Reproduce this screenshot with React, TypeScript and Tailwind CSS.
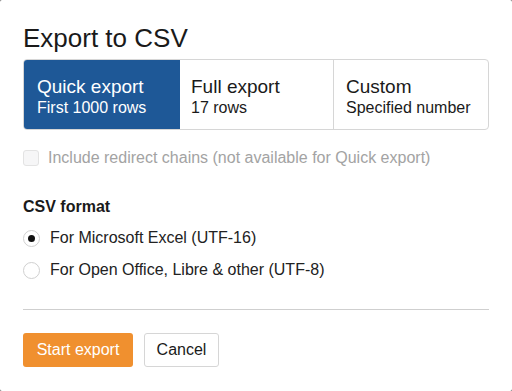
import React from "react";

export default function App() {
  return (
    <div
      className="w-[512px] h-[391px] bg-[#6b6b6b]"
      style={{ fontFamily: '"Liberation Sans", Arial, sans-serif' }}
    >
      <div className="w-full h-full bg-white rounded-[2px] flex flex-col px-[23px] pt-[23px] text-[#222]">
        <h1 className="text-[26px] leading-[30px] text-[#1a1a1a]">Export to CSV</h1>

        <div className="mt-[6px] h-[71px] flex border border-[#d6d6d6] rounded-[4px] overflow-hidden">
          <div className="w-[156px] bg-[#1e5897] text-white pl-[13px] pt-[16px]">
            <div className="text-[19px] leading-[22px]">Quick export</div>
            <div className="text-[16px] leading-[20px]">First 1000 rows</div>
          </div>
          <div className="w-[154px] border-r border-[#d6d6d6] pl-[11px] pt-[16px] text-[#1a1a1a]">
            <div className="text-[19px] leading-[22px]">Full export</div>
            <div className="text-[16px] leading-[20px]">17 rows</div>
          </div>
          <div className="flex-1 pl-[12px] pt-[16px] text-[#1a1a1a]">
            <div className="text-[19px] leading-[22px]">Custom</div>
            <div className="text-[16px] leading-[20px]">Specified number</div>
          </div>
        </div>

        <div className="mt-[16px] h-[24px] flex items-center">
          <div className="w-[16px] h-[16px] rounded-[3px] border border-[#e3e3e3] bg-[#f6f6f7]" />
          <span className="ml-[9px] text-[16px] text-[#a3a3a3]">
            Include redirect chains (not available for Quick export)
          </span>
        </div>

        <div className="mt-[25px] h-[24px] flex items-center text-[16px] font-bold text-[#1a1a1a]">
          CSV format
        </div>

        <div className="mt-[7px] h-[24px] flex items-center">
          <div className="w-[17px] h-[17px] rounded-full border border-[#d0d0d0] bg-white flex items-center justify-center">
            <div className="w-[7px] h-[7px] rounded-full bg-[#111]" />
          </div>
          <span className="ml-[10px] text-[16px] text-[#222]">For Microsoft Excel (UTF-16)</span>
        </div>

        <div className="mt-[8px] h-[24px] flex items-center">
          <div className="w-[17px] h-[17px] rounded-full border border-[#d0d0d0] bg-white" />
          <span className="ml-[10px] text-[16px] text-[#222]">
            For Open Office, Libre &amp; other (UTF-8)
          </span>
        </div>

        <div className="mt-[27px] h-px bg-[#cfcfcf]" />

        <div className="mt-[23px] flex gap-[11px]">
          <button className="h-[34px] w-[110px] rounded-[3px] bg-[#f0902f] text-white text-[16px]">
            Start export
          </button>
          <button className="h-[34px] w-[75px] rounded-[3px] border border-[#d6d6d6] bg-white text-[#1a1a1a] text-[16px]">
            Cancel
          </button>
        </div>
      </div>
    </div>
  );
}
